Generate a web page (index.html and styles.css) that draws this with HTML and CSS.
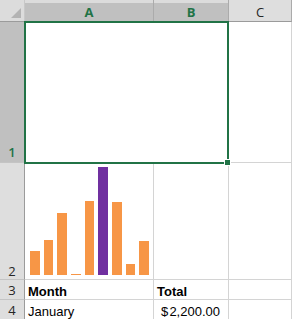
FILE: index.html
```html
<!DOCTYPE html>
<html>
<head>
<meta charset="utf-8">
<link rel="stylesheet" href="styles.css">
</head>
<body>
<div class="sheet">
  <div class="corner">
    <svg class="tri" width="25" height="22" viewBox="0 0 25 22"><polygon points="21,8 21,18 11,18" fill="#b3b3b3"/></svg>
  </div>
  <div class="colhdr sel">A</div>
  <div class="colhdr sel">B</div>
  <div class="colhdr">C</div>

  <div class="rowhdr sel r1">1</div>
  <div class="cell merged"></div>
  <div class="cell"></div>

  <div class="rowhdr r2">2</div>
  <div class="cell chartcell">
    <svg class="chart" width="128" height="116" viewBox="0 0 128 116">
      <rect x="5" y="88" width="10" height="24" fill="#f79646"/>
      <rect x="19" y="77" width="9" height="35" fill="#f79646"/>
      <rect x="32" y="50" width="10" height="62" fill="#f79646"/>
      <rect x="46" y="111" width="10" height="1" fill="#f79646"/>
      <rect x="60" y="38" width="9" height="74" fill="#f79646"/>
      <rect x="73" y="4" width="10" height="108" fill="#7030a0"/>
      <rect x="87" y="39" width="10" height="73" fill="#f79646"/>
      <rect x="101" y="101" width="9" height="11" fill="#f79646"/>
      <rect x="114" y="78" width="10" height="34" fill="#f79646"/>
    </svg>
  </div>
  <div class="cell"></div>
  <div class="cell"></div>

  <div class="rowhdr">3</div>
  <div class="cell text bold">Month</div>
  <div class="cell text bold">Total</div>
  <div class="cell"></div>

  <div class="rowhdr">4</div>
  <div class="cell text">January</div>
  <div class="cell text money"><span>$</span><span>2,200.00</span></div>
  <div class="cell"></div>

  <div class="selection"></div>
  <div class="handle"></div>
</div>
</body>
</html>
```
FILE: styles.css
```css
html, body {
  margin: 0;
  padding: 0;
  background: #ffffff;
  overflow: hidden;
}
.sheet {
  position: relative;
  display: grid;
  grid-template-columns: 25px 129px 75px 63px;
  grid-template-rows: 22px 141px 117px 20px 20px;
  width: 292px;
}
.sheet > div {
  box-sizing: border-box;
}
.corner {
  background: #dcdcdc;
  border-right: 1px solid #c8c8c8;
  border-bottom: 1px solid #9b9b9b;
}
.tri {
  display: block;
}
.colhdr {
  background: #dedede;
  border-right: 1px solid #ababab;
  border-bottom: 1px solid #9b9b9b;
  font-family: "Open Sans", "Noto Sans", sans-serif;
  font-size: 13px;
  color: #262626;
  display: flex;
  align-items: center;
  justify-content: center;
  padding-top: 3px;
  line-height: 16px;
}
.colhdr.sel {
  background: #c0c0c0;
  box-shadow: inset 0 3px 0 #dcdcdc;
  color: #217346;
  font-weight: 700;
}
.rowhdr {
  background: #dedede;
  border-right: 1px solid #9b9b9b;
  border-bottom: 1px solid #c4c4c4;
  font-family: "Open Sans", "Noto Sans", sans-serif;
  font-size: 13px;
  color: #262626;
  display: flex;
  align-items: flex-end;
  justify-content: center;
  line-height: 16px;
  padding-bottom: 1px;
}
.rowhdr.sel {
  background: #c0c0c0;
  color: #217346;
  font-weight: 600;
  padding-bottom: 2px;
}
.rowhdr.r2 {
  padding-bottom: 0;
}
.cell {
  border-right: 1px solid #d4d4d4;
  border-bottom: 1px solid #d4d4d4;
  background: #ffffff;
}
.merged {
  grid-column: span 2;
}
.chartcell {
  overflow: hidden;
}
.chart {
  display: block;
}
.text {
  font-family: "Liberation Sans", Arial, sans-serif;
  font-size: 13px;
  color: #000000;
  display: flex;
  align-items: flex-end;
  padding-left: 3px;
  line-height: 15px;
  white-space: nowrap;
}
.bold {
  font-weight: bold;
}
.money {
  justify-content: space-between;
  padding-left: 7px;
  padding-right: 8px;
}
.selection {
  position: absolute;
  left: 24px;
  top: 21px;
  width: 205px;
  height: 143px;
  border: 2px solid #217346;
  pointer-events: none;
}
.handle {
  position: absolute;
  left: 224px;
  top: 159px;
  width: 7px;
  height: 7px;
  background: #217346;
  border: 1px solid #ffffff;
}
```
